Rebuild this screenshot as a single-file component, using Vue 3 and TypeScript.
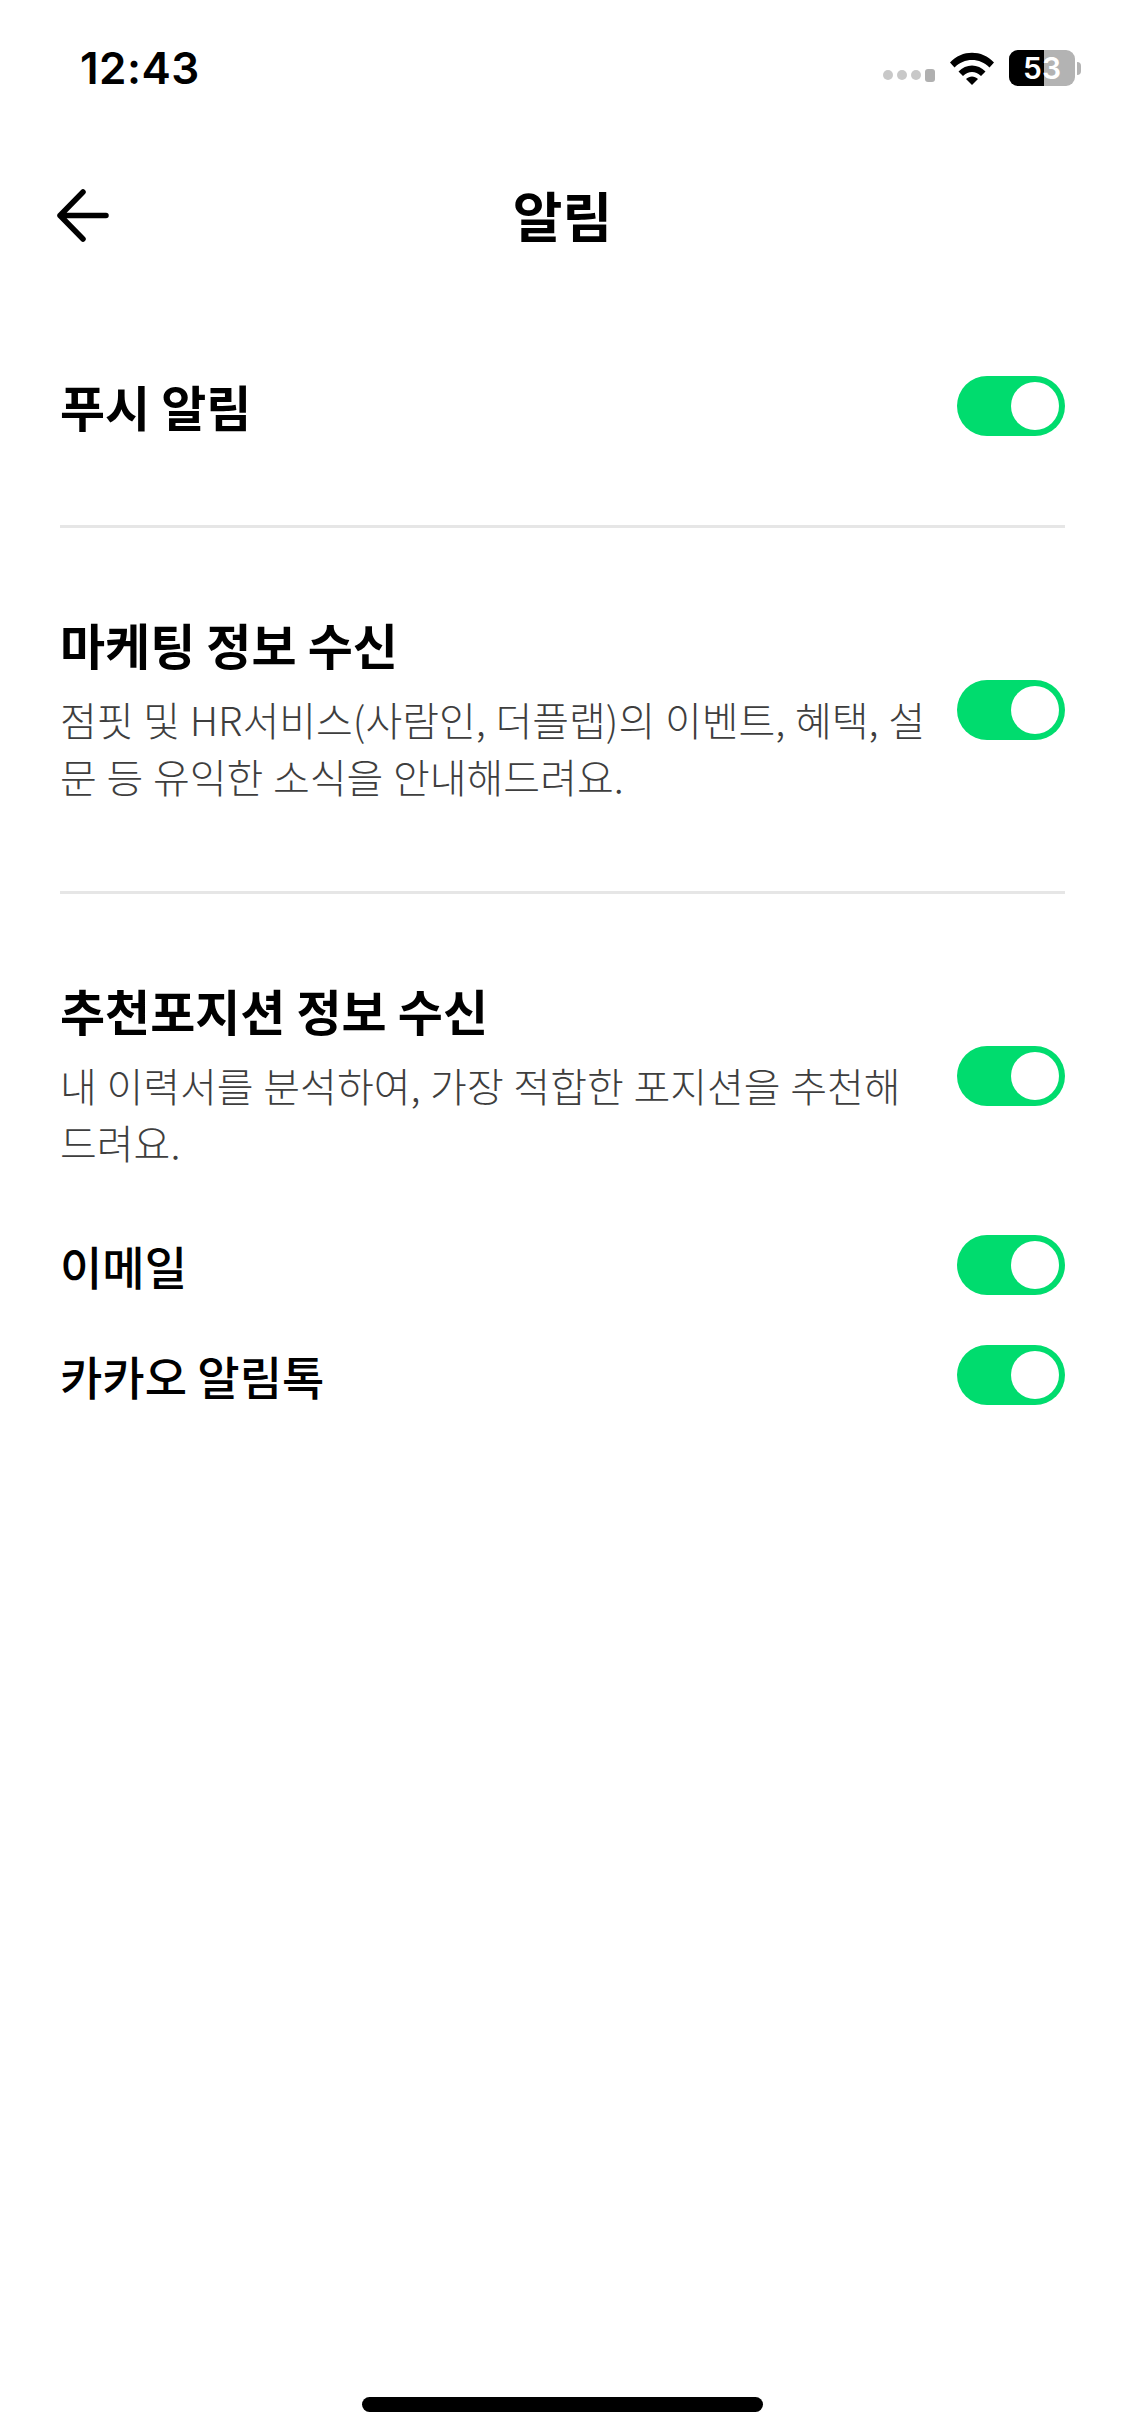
<script setup lang="ts">
interface Section {
  title: string
  desc?: string
}

const sections: Section[] = [
  { title: "푸시 알림" },
  {
    title: "마케팅 정보 수신",
    desc: "점핏 및 HR서비스(사람인, 더플랩)의 이벤트, 혜택, 설문 등 유익한 소식을 안내해드려요.",
  },
  {
    title: "추천포지션 정보 수신",
    desc: "내 이력서를 분석하여, 가장 적합한 포지션을 추천해드려요.",
  },
]

const channels = ["이메일", "카카오 알림톡"]
</script>

<template>
  <div class="page">
    <div class="status-bar">
      <span class="time">12:43</span>
      <div class="status-icons">
        <div class="signal">
          <i></i><i></i><i></i><i class="last"></i>
        </div>
        <svg class="wifi" width="46" height="34" viewBox="0 0 46 34">
          <path d="M1 11.5C13 -1.5 33 -1.5 45 11.5L40.5 16.5C31 6.5 15 6.5 5.500 16.500Z" />
          <path d="M9.500 20.500C17 12.500 29 12.500 36.500 20.500L32 25C26.500 19.500 19.500 19.500 14 25Z" />
          <path d="M17 28C20.500 24.500 25.500 24.500 29 28L23 34Z" />
        </svg>
        <div class="battery">
          <div class="battery-body">
            <div class="battery-fill"></div>
            <span class="battery-num">53</span>
          </div>
          <div class="battery-cap"></div>
        </div>
      </div>
    </div>

    <header class="nav">
      <svg class="back" width="54" height="54" viewBox="0 0 54 54" fill="none">
        <path d="M26 4L3 27.500L26 51M3 27.500H49" stroke="#000" stroke-width="5.500" stroke-linecap="round" stroke-linejoin="round" />
      </svg>
      <h1 class="nav-title">알림</h1>
    </header>

    <main class="content">
      <section v-for="section in sections" :key="section.title" class="section">
        <div class="row">
          <div class="row-text">
            <h2 class="row-title">{{ section.title }}</h2>
            <p v-if="section.desc" class="row-desc">{{ section.desc }}</p>
          </div>
          <div class="toggle"><span class="knob"></span></div>
        </div>
      </section>
      <div class="channels">
        <div v-for="channel in channels" :key="channel" class="channel">
          <span class="channel-name">{{ channel }}</span>
          <div class="toggle"><span class="knob"></span></div>
        </div>
      </div>
    </main>

    <div class="home-indicator"></div>
  </div>
</template>

<style scoped>
.page {
  position: relative;
  width: 1125px;
  height: 2436px;
  background: #fff;
  color: #000;
  font-family: "Noto Sans CJK KR", "Noto Sans", sans-serif;
  overflow: hidden;
}

.status-bar {
  height: 173px;
  padding: 42px 44px 0 80px;
  box-sizing: border-box;
  display: flex;
  justify-content: space-between;
  align-items: flex-start;
}

.time {
  font-family: Inter, "Liberation Sans", sans-serif;
  font-size: 44px;
  font-weight: 600;
  line-height: 52px;
  letter-spacing: 0.5px;
}

.status-icons {
  display: flex;
  align-items: center;
  gap: 14px;
  height: 52px;
}

.signal {
  display: flex;
  align-items: center;
  gap: 4px;
  margin-top: 14px;
}

.signal i {
  display: block;
  width: 10px;
  height: 10px;
  border-radius: 50%;
  background: #c8c8c8;
}

.signal i.last {
  height: 13px;
  border-radius: 3px;
  background: #b0b0b0;
}

.wifi {
  fill: #000;
}

.battery {
  display: flex;
  align-items: center;
  gap: 2px;
}

.battery-body {
  position: relative;
  width: 66px;
  height: 36px;
  border-radius: 9px;
  background: #b3b3b3;
  overflow: hidden;
  display: flex;
  align-items: center;
  justify-content: center;
}

.battery-fill {
  position: absolute;
  inset: 0 auto 0 0;
  width: 35px;
  background: #000;
}

.battery-num {
  position: relative;
  color: #fff;
  font-family: Inter, "Liberation Sans", sans-serif;
  font-size: 30px;
  font-weight: 600;
  line-height: 36px;
}

.battery-cap {
  width: 4px;
  height: 13px;
  border-radius: 0 4px 4px 0;
  background: #b3b3b3;
}

.nav {
  position: relative;
  height: 84px;
  padding: 0 58px;
  display: flex;
  align-items: center;
  justify-content: center;
}

.back {
  position: absolute;
  left: 57px;
  top: 15px;
}

.nav-title {
  margin: 0;
  font-size: 54px;
  font-weight: 700;
  line-height: 84px;
}

.content {
  padding: 0 60px;
}

.section {
  padding: 86px 0;
  border-bottom: 3px solid #e6e6e6;
}

.section:first-child {
  padding: 119px 0 89px;
}

.section:nth-child(3) {
  border-bottom: 0;
  padding-bottom: 0;
}

.row {
  display: flex;
  align-items: center;
  justify-content: space-between;
}

.row-text {
  width: 872px;
}

.row-title {
  margin: 0;
  font-size: 49px;
  font-weight: 700;
  line-height: 60px;
}

.row-desc {
  margin: 17px 0 0;
  font-size: 40px;
  font-weight: 300;
  line-height: 57px;
  word-spacing: 0.8px;
  color: #3e3e3e;
}

.toggle {
  flex: none;
  width: 108px;
  height: 60px;
  padding: 6px;
  box-sizing: border-box;
  border-radius: 30px;
  background: #00dc6e;
  display: flex;
  justify-content: flex-end;
}

.knob {
  display: block;
  width: 48px;
  height: 48px;
  border-radius: 50%;
  background: #fff;
}

.channels {
  margin-top: 64px;
  display: flex;
  flex-direction: column;
  gap: 50px;
}

.channel {
  display: flex;
  align-items: center;
  justify-content: space-between;
}

.channel-name {
  font-size: 46px;
  font-weight: 500;
  line-height: 60px;
}

.home-indicator {
  position: absolute;
  left: 362px;
  bottom: 24px;
  width: 401px;
  height: 15px;
  border-radius: 8px;
  background: #000;
}
</style>

<style>
html,
body {
  margin: 0;
  background: #fff;
}
</style>
